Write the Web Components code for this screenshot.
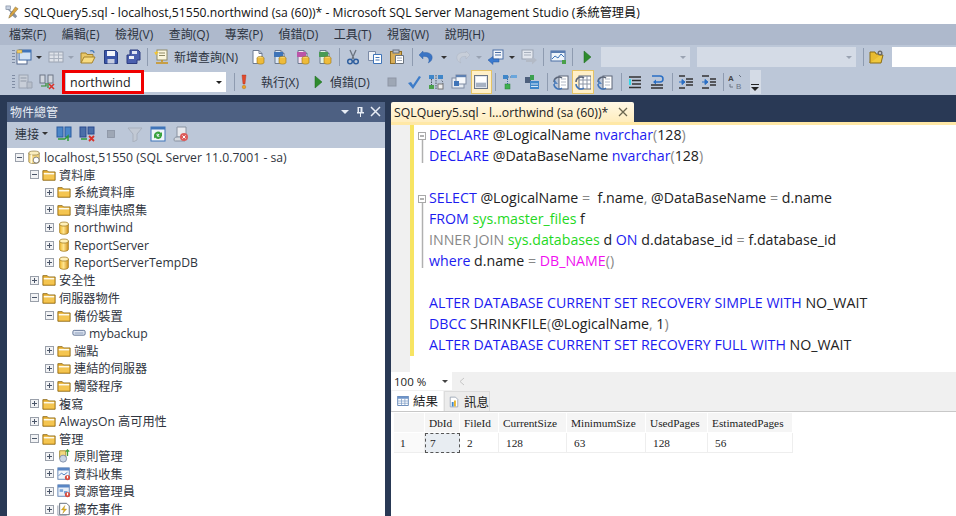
<!DOCTYPE html>
<html lang="zh-Hant">
<head>
<meta charset="utf-8">
<title>SSMS</title>
<style>
html,body{margin:0;padding:0;height:516px;overflow:hidden;background:#293955;font-family:"Open Sans","Noto Sans CJK TC",sans-serif;}
ssms-app{display:block;}
</style>
</head>
<body>
<ssms-app></ssms-app>
<script>
const SANS='"Open Sans","Noto Sans CJK TC",sans-serif';
const cyl='<defs><linearGradient id="g"><stop offset="0" stop-color="#f2b92e"/><stop offset=".45" stop-color="#ffe58f"/><stop offset="1" stop-color="#d1901a"/></linearGradient></defs><path d="M3 3.500v9.500c0 1.200 2.200 2.200 5 2.200s5-1 5-2.200V3.500z" fill="url(#g)" stroke="#9b7418" stroke-width=".8"/><ellipse cx="8" cy="3.500" rx="5" ry="2.300" fill="#fff0b8" stroke="#9b7418" stroke-width=".8"/>';
const doc=(c='#fff')=>`<path d="M4 1.500h6l3 3v10H4z" fill="${c}" stroke="#6d7a90"/><path d="M10 1.500v3h3" fill="none" stroke="#6d7a90"/>`;
const dbdot='<ellipse cx="11.500" cy="9" rx="3.500" ry="1.600" fill="#f7d36a" stroke="#9a7414" stroke-width=".6"/><path d="M8 9v4.500c0 .9 1.600 1.600 3.500 1.600s3.500-.7 3.500-1.600V9" fill="#eebb3a" stroke="#9a7414" stroke-width=".6"/>';
const ICONS={
 tools:'<path d="M2 2l5 5 1-1 5 6-2 2-6-5 1-1-5-5z" fill="#8a93a3"/><path d="M11 2l3 2-7 8-3 2 1-3z" fill="#d9a441" stroke="#7a6a3a" stroke-width=".5"/><rect x="1" y="1" width="5" height="4" fill="#c9d3e2" stroke="#6d7a90" stroke-width=".6"/>',
 newproj:'<rect x="1" y="3" width="10" height="12" fill="#fff" stroke="#54698c"/><rect x="3" y="1" width="12" height="10" fill="#cfe0f2" stroke="#3f6aa5"/><rect x="3" y="1" width="12" height="2.500" fill="#3f74b8"/><rect x="1" y="1" width="5" height="3" fill="#f2cf6a" stroke="#b08a2a" stroke-width=".5"/>',
 tbl:'<rect x="1" y="3" width="14" height="10" fill="#dfe3ea" stroke="#9aa3b2"/><path d="M1 6h14M1 9.500h14M6 3v10M10.500 3v10" stroke="#aab2bf" fill="none"/>',
 open:'<path d="M1 14V4h5l1 1.500h6V8" fill="#e9c768" stroke="#a5832d"/><path d="M1 14l3-6h11l-3 6z" fill="#f8dc82" stroke="#a5832d"/><path d="M10 2c2-1 4 0 4 2" fill="none" stroke="#4478b8" stroke-width="1.200"/>',
 save:'<path d="M1.500 1.500h11l2 2v11h-13z" fill="#3a55a8" stroke="#263c7e"/><rect x="4" y="2" width="8" height="5" fill="#f2f5fb"/><rect x="4.500" y="10" width="7" height="4.500" fill="#c6cde0"/>',
 saveall:'<path d="M5 1h8l2 2v8h-3v3.500H2V6h3z" fill="#4a5fae" stroke="#2c3c80"/><rect x="7" y="2" width="5" height="3" fill="#dfe4f3"/><rect x="4" y="7" width="5" height="3" fill="#eef1f9"/>',
 newq:'<rect x="3" y="1" width="10" height="10" fill="#fbf6dc" stroke="#8e8a66"/><path d="M5 4h6M5 6.500h6" stroke="#8e8a66"/><path d="M2 1l1 2 2 .5-2 1-1 2-1-2-1-1 2-.5z" fill="#f4c52a"/><path d="M8 11v2M2 14h12" stroke="#c99116" stroke-width="1.500"/>',
 docdb:doc()+dbdot,
 docdb2:doc('#dbe8f6')+'<rect x="3" y="3" width="9" height="5" fill="#3f74b8"/>'+dbdot,
 docdb3:doc('#f7e2f1')+'<rect x="3" y="3" width="9" height="5" fill="#bb55a8"/>'+dbdot,
 docdb4:doc('#e2f2e2')+'<rect x="3" y="3" width="9" height="5" fill="#4a9a55"/>'+dbdot,
 cut:'<path d="M5 1l4 9M11 1L7 10" stroke="#6b7480" stroke-width="1.300" fill="none"/><circle cx="5" cy="12.500" r="2.300" fill="none" stroke="#2f5f9f" stroke-width="1.500"/><circle cx="11" cy="12.500" r="2.300" fill="none" stroke="#2f5f9f" stroke-width="1.500"/>',
 copy:'<path d="M1.500 2.500h7v9h-7z" fill="#eef1f6" stroke="#7a8aa6"/><path d="M6.500 5.500h8v9h-8z" fill="#fff" stroke="#3f74b8"/><path d="M8.500 8.500h4M8.500 11h4" stroke="#3f74b8"/>',
 paste:'<rect x="1.500" y="2.500" width="11" height="12" fill="#d9ae58" stroke="#8d6c24"/><rect x="4" y="1" width="6" height="3" fill="#bfc5cf" stroke="#666f7e"/><path d="M6.500 6.500h8v8h-8z" fill="#fff" stroke="#6b7480"/><path d="M8 9h5M8 11.500h5" stroke="#a0a8b4"/>',
 undo:'<path d="M5 2L1 6l4 4V7.500c4-.5 6 1 6 4 0 1-.3 1.700-.8 2.500 3-1.500 4-3.500 4-5.500 0-4-4-5.500-9.200-5z" fill="#3a74c4" stroke="#2a5a9e" stroke-width=".4"/>',
 redo:'<path d="M11 2l4 4-4 4V7.500c-4-.5-6 1-6 4 0 1 .3 1.700.8 2.500-3-1.500-4-3.500-4-5.500 0-4 4-5.500 9.200-5z" fill="#c7ced9" stroke="#a7afbc" stroke-width=".4"/>',
 nav:'<rect x="5" y="1" width="10" height="9" fill="#f3f6fb" stroke="#4d70a5"/><path d="M7 3.500h6M7 6h6" stroke="#4d70a5"/><path d="M0 11l5-3.500V10h6v3H5v2.500z" fill="#3a7ad0" stroke="#28599e" stroke-width=".5"/>',
 navd:'<rect x="1" y="1" width="11" height="9" fill="#e3e7ee" stroke="#9aa3b2"/><path d="M3 3.500h7M3 6h7" stroke="#a8b0bd"/><path d="M16 11l-5-3.500V10H5v3h6v2.500z" fill="#b3bac6"/>',
 chart:'<rect x="1" y="2" width="14" height="10" fill="#eef4fa" stroke="#4d70a5"/><rect x="1" y="2" width="14" height="2" fill="#5a7db0"/><path d="M2 10l3-3 3 2 3-4 3 3" stroke="#3f74b8" fill="none"/><path d="M12 11h4v4h-4z" fill="#4aa04a"/>',
 play:'<path d="M5 2l7 6-7 6z" fill="#2e8b2e" stroke="#1f6a1f" stroke-width=".5"/>',
 opensm:'<path d="M1 14l2-8h11l-2 8z" fill="#f0c93f" stroke="#8b6d17"/><path d="M1 14V3h5l1 2h6" fill="#e8bb30" stroke="#8b6d17"/><circle cx="11" cy="4" r="2.500" fill="#6b6b6b"/><circle cx="11" cy="4" r="1" fill="#ddd"/>',
 srv1:'<rect x="2" y="1" width="9" height="13" fill="#c8ced8" stroke="#9aa3b2"/><path d="M3.500 4h6M3.500 7h6" stroke="#8f98a7"/><path d="M10 8h5v6h-5z" fill="#b8bfca" stroke="#9aa3b2"/>',
 srv2:'<rect x="1" y="1" width="5" height="8" fill="#d2d7df" stroke="#6c7686"/><rect x="9" y="1" width="5" height="8" fill="#d2d7df" stroke="#6c7686"/><path d="M2 12h5v-3M9 9v5" stroke="#2e8b2e" stroke-width="1.200" fill="none"/><path d="M10 10l5 5M15 10l-5 5" stroke="#d8322a" stroke-width="1.600"/>',
 bang:'<path d="M6 1h4L9 10H7z" fill="#e2482a" stroke="#a93218" stroke-width=".4"/><circle cx="8" cy="13" r="1.800" fill="#f0a11c" stroke="#a96a10" stroke-width=".4"/>',
 stop:'<rect x="4" y="4" width="8" height="8" fill="#9ea7b5" stroke="#8d96a5"/>',
 check:'<path d="M2 9l3-1 2 3 6-9 2 1-8 12z" fill="#3d7cc9"/>',
 plan:'<rect x="1" y="1" width="5" height="4" fill="#3f86c9"/><rect x="10" y="1" width="5" height="4" fill="#3f86c9"/><rect x="1" y="11" width="5" height="4" fill="#4aa04a"/><path d="M8 1v14M3.500 5v6M10 12a3 3 0 1 0 3-6" stroke="#4b5563" stroke-dasharray="1.500 1" fill="none"/><rect x="10" y="10" width="5" height="5" fill="#eee" stroke="#777"/>',
 win:'<rect x="1" y="4" width="12" height="10" fill="#e6ebf3" stroke="#7f8ca3"/><rect x="5" y="1" width="10" height="9" fill="#f6f8fb" stroke="#7f8ca3"/><rect x="5" y="1" width="10" height="2.200" fill="#5d80b2"/><rect x="3" y="7" width="5" height="5" fill="#3f74b8"/>',
 hsave:'<rect x="1.500" y="1.500" width="13" height="13" fill="#dfe5ee" stroke="#6c7686"/><rect x="3" y="9" width="10" height="4" fill="#a7b2c3"/><path d="M3 3h10v5H3z" fill="#fff"/>',
 tree:'<rect x="1" y="1" width="5" height="4" fill="#3f86c9"/><rect x="9" y="1" width="6" height="3" fill="#6aa6dc"/><rect x="3" y="10" width="5" height="5" fill="#3fb04f" stroke="#2b7f39" stroke-width=".5"/><path d="M5.500 5v5M6 3h3" stroke="#3a6a9a" stroke-dasharray="1 1"/>',
 blocks:'<rect x="1" y="3" width="6" height="6" fill="#4d5f7c"/><rect x="6" y="1" width="4" height="5" fill="#3ba04f"/><rect x="6" y="7" width="9" height="8" fill="#3f86c9"/><path d="M7 10h7M7 12.500h7" stroke="#d6e6f6"/>',
 res1:'<rect x="6" y="2" width="9" height="13" fill="#fff" stroke="#5c6678"/><path d="M8 5h5M8 8h5M8 11h5" stroke="#b3bac6"/><path d="M1 8a5 5 0 0 1 8-4" fill="none" stroke="#5c6678" stroke-width="1.500"/><path d="M1 10a5 5 0 0 0 8 4" fill="none" stroke="#3f74b8" stroke-width="1.500"/><path d="M1 5v5h4" fill="#3f74b8" opacity=".8"/>',
 res2:'<rect x="4" y="2" width="12" height="13" fill="#fff" stroke="#5c6678"/><path d="M4 6h12M4 10h12M8 2v13M12 2v13" stroke="#8c96a6"/><path d="M1 8a5 5 0 0 1 8-4" fill="none" stroke="#5c6678" stroke-width="1.500"/><path d="M1 10a5 5 0 0 0 8 4" fill="none" stroke="#3f74b8" stroke-width="1.500"/>',
 indent1:'<path d="M2 3h12M5 6.500h9M5 10h9M2 13.500h12" stroke="#333" stroke-width="1.300"/><path d="M2 5h2v6H2z" fill="#37d8e8"/>',
 indent2:'<path d="M3 2h8a2.500 2.500 0 0 1 0 6H6" stroke="#2a6fc4" stroke-width="1.500" fill="none"/><path d="M7 5.500L4 8l3 2.500z" fill="#2a6fc4"/><path d="M2 11h12M2 14h12" stroke="#333" stroke-width="1.300"/>',
 out1:'<path d="M1 2h6M8 5h7M8 8h7M8 11h7M1 14h6" stroke="#333" stroke-width="1.600"/><path d="M1 8h4M7 8L4 5.500v5z" fill="#2a6fc4" stroke="#2a6fc4"/>',
 out2:'<path d="M1 2h7M9 5h6M9 8h6M9 11h6M1 14h7" stroke="#333" stroke-width="1.600"/><path d="M1 8h3M7 8L4 5.500v5z" fill="#2a6fc4" stroke="#2a6fc4"/>',
 spec:'<text x="0" y="7" font-size="8" font-family="Liberation Sans" font-weight="bold" fill="#444">A</text><text x="8" y="15" font-size="8" font-family="Liberation Sans" fill="#6a7484">B</text><path d="M11 1l2 2M2 10v3h3" stroke="#6a7484" fill="none"/>',
 conn1:'<rect x="1" y="1" width="6" height="10" fill="#4a86c8" stroke="#2a5a9e"/><rect x="9" y="1" width="6" height="10" fill="#4a86c8" stroke="#2a5a9e"/><path d="M2 13h7M9 13l3-3v5" stroke="#2e9b3a" stroke-width="1.500" fill="none"/>',
 conn2:'<rect x="1" y="1" width="6" height="10" fill="#4a6ea8" stroke="#2a4a8e"/><rect x="9" y="1" width="6" height="7" fill="#4a6ea8" stroke="#2a4a8e"/><path d="M2 13h6" stroke="#2e9b3a" stroke-width="1.500"/><path d="M10 10l5 5M15 10l-5 5" stroke="#d8322a" stroke-width="1.800"/>',
 filter:'<path d="M1 2h14L10 8v6l-4 2V8z" fill="#c2c9d4" stroke="#a8b0bd"/>',
 refresh:'<rect x="1" y="1" width="14" height="14" fill="#f0f5fb" stroke="#3f74b8"/><rect x="1" y="1" width="14" height="2.500" fill="#3f74b8"/><path d="M4 9a4 4 0 0 1 7-2l1-1v4H8l1.500-1.300A2.400 2.400 0 0 0 5.500 9zM12 9.500a4 4 0 0 1-7 2l-1 1v-4h4l-1.500 1.300a2.400 2.400 0 0 0 4 -.3z" fill="#39a33f"/>',
 report:'<path d="M4 1h9v10H4z" fill="#e7e9ee" stroke="#8992a1"/><path d="M1 14c0-2 1-3 3-3h8c-1 1-1 3 0 4H3c-1 0-2 0-2-1z" fill="#d4d8df" stroke="#8992a1"/><circle cx="11" cy="11" r="4" fill="#dc5b5b"/><path d="M9.500 9.500l3 3M12.500 9.500l-3 3" stroke="#fff"/>',
 server:'<path d="M2 3.500v10c0 1 2.500 2 6 2s6-1 6-2v-10z" fill="#f5d57c" stroke="#8c7a45" stroke-width=".8"/><ellipse cx="8" cy="3.500" rx="6" ry="2.300" fill="#fbeebe" stroke="#8c7a45" stroke-width=".8"/><path d="M5 5v10" stroke="#fff8dc" stroke-width="2"/><circle cx="10.500" cy="11.500" r="3.400" fill="#fff" stroke="#777"/>',
 folder:'<path d="M1 14V3h5l1.500 1.500H15V14z" fill="#e8ad2c" stroke="#8f6d1c"/><path d="M2 5.500h12V7.500H2z" fill="#fffbe8"/><path d="M2 8h12v5H2z" fill="#f4c550"/>',
 db:cyl,
 device:'<rect x="1" y="5" width="14" height="5.500" rx="1.500" fill="#dfe6f2" stroke="#55688a"/><path d="M3 8h10" stroke="#8ea0bd" stroke-width="1.200"/>',
 policy:'<path d="M3 2h7v9H3z" fill="#f3d97e" stroke="#a68a30"/><circle cx="7" cy="11" r="4" fill="#cad5e4" stroke="#7d8ca5"/><path d="M12 1v7M10 3l2-2 2 2" stroke="#3f9f3f" stroke-width="1.500" fill="none"/>',
 collect:'<rect x="1" y="1" width="13" height="13" fill="#f3f7fb" stroke="#5a7cae"/><rect x="1" y="1" width="13" height="3" fill="#5a86c4"/><path d="M2 10l3-3 3 2 4-3" stroke="#3f74b8" fill="none"/><circle cx="12" cy="12" r="3" fill="#d84c3e"/><rect x="11.300" y="10" width="1.400" height="3" fill="#fff"/>',
 resgov:'<rect x="1" y="1" width="13" height="13" fill="#eaf0f8" stroke="#5a7cae"/><rect x="1" y="1" width="13" height="3" fill="#5a86c4"/><rect x="3" y="6" width="4" height="3" fill="#7aa4d8"/><rect x="8" y="8" width="4" height="3" fill="#7aa4d8"/><circle cx="12" cy="12" r="3" fill="#d84c3e"/><rect x="11.300" y="10" width="1.400" height="3" fill="#fff"/>',
 ext:'<path d="M3 1.500h8l3 3v10H3z" fill="#fff" stroke="#55606f"/><path d="M1 4v11h10" fill="none" stroke="#8b94a3"/><path d="M9 4L5 9h3l-1.500 4L11 8H8z" fill="#e5b420" stroke="#a57e12" stroke-width=".4"/>',
 grid:'<rect x="1" y="2" width="14" height="12" fill="#fff" stroke="#3f6aa5"/><rect x="1" y="2" width="14" height="3" fill="#6d94c9"/><path d="M1 8h14M1 11h14M6 5v9M10.500 5v9" stroke="#7d9cc6"/>',
 msg:'<path d="M3 1.500h7l3 3v10H3z" fill="#fff" stroke="#8d99ab"/><rect x="5" y="8" width="2.500" height="6" fill="#3f86c9"/><rect x="8" y="6" width="2.500" height="8" fill="#e8b52e"/>'
};
const svg=(n,w=16,h=16)=>`<svg xmlns="http://www.w3.org/2000/svg" width="${w}" height="${h}" viewBox="0 0 16 16" style="display:block;flex:none">${ICONS[n]||''}</svg>`;

class TitleBar extends HTMLElement{constructor(){super();this.attachShadow({mode:'open'}).innerHTML=`<style>
:host{display:flex;align-items:center;height:24px;background:#fff;color:#111;font:12.150px ${SANS};gap:4px;padding-left:5px;white-space:nowrap}
</style>${svg('tools',15,15)}<slot></slot>`}}
customElements.define('title-bar',TitleBar);

class MenuBar extends HTMLElement{constructor(){super();this.attachShadow({mode:'open'}).innerHTML=`<style>
:host{display:flex;align-items:center;height:21px;background:#aeb9cc;color:#2c3340;font:12px ${SANS};gap:15.500px;padding:0 0 2px 9px;box-sizing:border-box;white-space:nowrap}
</style><slot></slot>`}}
customElements.define('menu-bar',MenuBar);

class ToolBar extends HTMLElement{constructor(){super();this.attachShadow({mode:'open'}).innerHTML=`<style>
:host{display:flex;align-items:center;background:#bcc7d8;height:24px;color:#2c3340;font:12px ${SANS};white-space:nowrap;overflow:hidden}
.grip{width:3px;height:15px;margin:0 0 0 12px;flex:none;background:repeating-linear-gradient(#7f8ca3 0 1px,transparent 1px 3px)}
</style><div class="grip"></div><slot></slot>`}}
customElements.define('tool-bar',ToolBar);

class TbIcon extends HTMLElement{
 constructor(){super();this.attachShadow({mode:'open'})}
 connectedCallback(){
  const w=+(this.getAttribute('w')||23),hi=this.hasAttribute('hi'),n=this.getAttribute('n'),s=+(this.getAttribute('s')||16);
  this.shadowRoot.innerHTML=`<style>:host{display:flex;flex:none;align-items:center;justify-content:center;width:${w}px;height:${hi?24:22}px;box-sizing:border-box;${hi?'background:#fff0c8;border:1px solid #e5c365;':''}}</style>${svg(n,s,s)}`;
 }
}
customElements.define('tb-icon',TbIcon);

class TbArrow extends HTMLElement{constructor(){super();const c=this.getAttribute('dim')!==null?'#98a2b2':'#333';this.attachShadow({mode:'open'}).innerHTML=`<style>:host{display:block;flex:none;width:${this.getAttribute('w')||9}px}i{display:block;width:0;height:0;margin:0 auto;border:3px solid transparent;border-bottom:0;border-top-color:${c}}</style><i></i>`}}
customElements.define('tb-arrow',TbArrow);

class TbSep extends HTMLElement{constructor(){super();const l=this.getAttribute('l')||this.getAttribute('m')||3,r=this.getAttribute('r')||this.getAttribute('m')||3;this.attachShadow({mode:'open'}).innerHTML=`<style>:host{display:block;flex:none;width:1px;height:18px;background:#8e9bb0;margin:0 ${r}px 0 ${l}px}</style>`}}
customElements.define('tb-sep',TbSep);

class TbGap extends HTMLElement{constructor(){super();this.attachShadow({mode:'open'}).innerHTML=`<style>:host{display:block;flex:none;width:${this.getAttribute('w')}px}</style>`}}
customElements.define('tb-gap',TbGap);

class TbLabel extends HTMLElement{constructor(){super();this.attachShadow({mode:'open'}).innerHTML=`<style>:host{display:block;flex:none}</style><slot></slot>`}}
customElements.define('tb-label',TbLabel);

class TbCombo extends HTMLElement{constructor(){super();
 const w=this.getAttribute('w'),dis=this.hasAttribute('disabled'),red=this.hasAttribute('mark');
 this.attachShadow({mode:'open'}).innerHTML=`<style>
 :host{display:flex;flex:none;align-items:center;position:relative;box-sizing:border-box;width:${w}px;height:20px;background:${dis?'#d4dbe6':'#fff'};font:12.500px ${SANS};color:#1a1a1a;padding-left:4px}
 i{position:absolute;right:4px;top:9px;border:3px solid transparent;border-bottom:0;border-top-color:${dis?'#9aa3b2':'#222'}}
 b{position:absolute;left:-4px;top:-2px;width:82px;height:24px;box-sizing:border-box;border:3px solid #f00000;display:${red?'block':'none'}}
 </style><slot></slot><i></i><b></b>`}}
customElements.define('tb-combo',TbCombo);

class ToolPanel extends HTMLElement{constructor(){super();
 this.attachShadow({mode:'open'}).innerHTML=`<style>
 :host{display:flex;flex-direction:column;width:378px;height:414px;background:#fff;overflow:hidden;flex:none}
 header{display:flex;align-items:center;height:20px;box-sizing:border-box;background:#4d6082;color:#e8edf5;font:12px ${SANS};padding:0 4px 1px 3px;flex:none}
 header span{flex:1}
 header svg{margin-left:5px}
 .bar{display:flex;align-items:center;height:26px;box-sizing:border-box;background:#bcc7d8;flex:none;padding:0 0 3px 8px;color:#2c3340;font:12px ${SANS}}
 .bar i{margin:0 8px 0 3px;border:3px solid transparent;border-bottom:0;border-top-color:#333}
 .ico{margin-right:7px}
 .tree{flex:1;padding-top:.4px}
 </style>
 <header><span>物件總管</span>
  <svg width="9" height="9" viewBox="0 0 9 9"><path d="M0 3h8L4 7z" fill="#e8edf5"/></svg>
  <svg width="10" height="11" viewBox="0 0 10 11"><path d="M2.500 1h5v5h1.500v1.500h-3V11h-1V7.500h-3V6h.5zM4 2v4h1.500V2z" fill="#e8edf5"/></svg>
  <svg width="11" height="11" viewBox="0 0 11 11"><path d="M1 1l9 9M10 1l-9 9" stroke="#e8edf5" stroke-width="1.500"/></svg>
 </header>
 <div class="bar"><span>連接</span><i></i><span class="ico">${svg('conn1')}</span><span class="ico">${svg('conn2')}</span><span class="ico" style="margin-left:2px;margin-right:9px">${svg('stop',14,14)}</span><span class="ico">${svg('filter')}</span><span class="ico">${svg('refresh')}</span><span class="ico">${svg('report')}</span></div>
 <div class="tree"><slot></slot></div>`}}
customElements.define('tool-panel',ToolPanel);

class TreeNode extends HTMLElement{constructor(){super();this.attachShadow({mode:'open'})}
 connectedCallback(){
  const d=+this.getAttribute('d'),ex=this.getAttribute('ex'),ic=this.getAttribute('i');
  const box=ex?`<svg width="9" height="9" viewBox="0 0 9 9" style="display:block"><rect x=".5" y=".5" width="8" height="8" fill="#f2f3f5" stroke="#9aa0aa"/><path d="M2 4.500h5${ex==='+'?'M4.500 2v5':''}" stroke="#4a5568"/></svg>`:'';
  this.shadowRoot.innerHTML=`<style>
  :host{display:flex;align-items:center;height:17.600px;padding-left:${8+d*15}px;color:#303540;font:12.200px ${SANS};white-space:nowrap}
  .x{width:9px;height:9px;flex:none;margin-right:3px}
  .i{flex:none;width:14px;margin-right:3px}
  </style><span class="x">${box}</span><span class="i">${svg(ic,14,14)}</span><slot></slot>`}}
customElements.define('tree-node',TreeNode);

class DocTab extends HTMLElement{constructor(){super();this.attachShadow({mode:'open'}).innerHTML=`<style>
 :host{display:flex;align-items:center;width:243px;height:20px;box-sizing:border-box;padding:0 6px 0 3px;background:linear-gradient(#fff8e6,#ffedbd);border-radius:2px 2px 0 0;color:#222;font:12.300px ${SANS};white-space:nowrap;justify-content:space-between}
 </style><slot></slot><svg width="10" height="10" viewBox="0 0 10 10"><path d="M1 1l8 8M9 1l-8 8" stroke="#6b6650" stroke-width="1.300"/></svg>`}}
customElements.define('doc-tab',DocTab);

class SqlEditor extends HTMLElement{constructor(){super();this.attachShadow({mode:'open'}).innerHTML=`<style>
 :host{display:flex;height:247px;background:#fff;overflow:hidden}
 .g{width:19px;background:#f0f0f0;flex:none}
 .c{flex:1;align-self:flex-start;border-left:4px solid #f7e463;padding-left:4px}
 </style><div class="g"></div><div class="c"><slot></slot></div>`}}
customElements.define('sql-editor',SqlEditor);

class SqlLine extends HTMLElement{constructor(){super();this.attachShadow({mode:'open'})}
 connectedCallback(){
  const m=this.getAttribute('m');
  const o=m==='box'?`<svg width="11" height="21" viewBox="0 0 11 21" style="display:block"><path d="M4.500 14v7" stroke="#b0b0b0" stroke-width="1.500"/><rect x=".5" y="7.500" width="7" height="7" fill="#fff" stroke="#a9a9a9"/><path d="M2 11h4" stroke="#666"/></svg>`
   :m==='line'?`<svg width="11" height="21" viewBox="0 0 11 21" style="display:block"><path d="M4.500 0v21" stroke="#b0b0b0" stroke-width="1.500"/></svg>`
   :m==='end'?`<svg width="11" height="21" viewBox="0 0 11 21" style="display:block"><path d="M4.500 0v17" stroke="#b0b0b0" stroke-width="1.500"/></svg>`:'';
  this.shadowRoot.innerHTML=`<style>
  :host{display:flex;height:21px;font:14.200px/20px ${SANS};color:#222;white-space:pre}
  .o{width:11px;flex:none}
  </style><span class="o">${o}</span><slot></slot>`}}
customElements.define('sql-line',SqlLine);

class SqlTok extends HTMLElement{constructor(){super();const C={k:'#1c1cf0',g:'#888',t:'#1fd81f',f:'#f010f0'};this.attachShadow({mode:'open'}).innerHTML=`<style>:host{color:${C[this.getAttribute('c')]}}</style><slot></slot>`}}
customElements.define('sql-tok',SqlTok);

class ZoomBar extends HTMLElement{constructor(){super();this.attachShadow({mode:'open'}).innerHTML=`<style>
 :host{display:flex;align-items:center;height:18px;background:#f0f0f0;font:11.500px ${SANS};color:#222}
 .z{display:flex;align-items:center;width:61px;height:18px;background:#fff;padding-left:3px;box-sizing:border-box;position:relative}
 i{position:absolute;right:4px;top:8px;border:3px solid transparent;border-bottom:0;border-top-color:#444}
 svg{margin-left:7px}
 </style><div class="z"><slot></slot><i></i></div><svg width="6" height="9" viewBox="0 0 6 9"><path d="M5 1L1 4.500 5 8" fill="none" stroke="#c6c6c6"/></svg>`}}
customElements.define('zoom-bar',ZoomBar);

class ResTabs extends HTMLElement{constructor(){super();this.attachShadow({mode:'open'}).innerHTML=`<style>
 :host{display:flex;align-items:flex-end;height:22px;background:#f0f0f0;padding-left:1px;border-bottom:1px solid #c8c8c8;box-sizing:border-box}
 </style><slot></slot>`}}
customElements.define('res-tabs',ResTabs);

class ResTab extends HTMLElement{constructor(){super();const a=this.hasAttribute('active');this.attachShadow({mode:'open'}).innerHTML=`<style>
 :host{display:flex;align-items:center;gap:4px;height:20px;box-sizing:border-box;padding:0 0 0 ${a?5:3}px;width:${this.getAttribute('w')}px;margin-right:1px;background:${a?'#fff':'#ececec'};font:12.500px/16px "Noto Sans CJK TC",sans-serif;color:#222;white-space:nowrap;${a?'':'border:1px solid #dcdcdc;border-bottom:0;'}}
 </style>${svg(this.getAttribute('i'),12,12)}<slot></slot>`}}
customElements.define('res-tab',ResTab);

class ResGrid extends HTMLElement{constructor(){super();this.attachShadow({mode:'open'}).innerHTML=`<style>
 :host{display:grid;grid-template-columns:31px 35px 39px 68px 79px 62px 85px;grid-auto-rows:20px;justify-content:start;font:11.300px "Liberation Serif","Noto Sans CJK TC",serif;color:#222;margin:1px 0 0 3px}
 </style><slot></slot>`}}
customElements.define('res-grid',ResGrid);

class GridCell extends HTMLElement{constructor(){super();const mode=this.getAttribute('t');this.attachShadow({mode:'open'}).innerHTML=`<style>
 :host{display:flex;align-items:center;box-sizing:border-box;padding-left:${mode==='d'?7:mode==='s'?4:mode==='r'?6:4}px;
 ${mode==='h'?'background:#f5f5f5;border-right:1px solid #fff;border-bottom:1px solid #fff;':''}
 ${mode==='d'?'border-right:1px solid #eee;border-bottom:1px solid #eee;':''}
 ${mode==='s'?'background:#e8edf2;border:1px dashed #555;':''}
 ${mode==='r'?'background:#fafafa;border-right:1px solid #eee;border-bottom:1px solid #eee;':''}
 }</style><slot></slot>`}}
customElements.define('grid-cell',GridCell);

class SsmsApp extends HTMLElement{constructor(){super();this.attachShadow({mode:'open'}).innerHTML=`<style>
 :host{display:block;width:956px;height:516px;overflow:hidden;background:#293955}
 .bars{display:flex;flex-direction:column}
 .main{display:flex;padding:7px 0 0 7px;gap:6px;height:414px}
 .right{flex:1;display:flex;flex-direction:column;min-width:0;height:414px;overflow:hidden}
 .strip{height:3px;background:#ffe8a6;flex:none}
 .res{flex:1;background:#fff}
 .t1{height:24px}.t2{height:26px}
 .wide{height:20px;background:#fff;flex:none;width:70px}
 .end{width:11px;height:24px;background:#d4dbe6;flex:none;display:flex;align-items:flex-end;justify-content:center;padding-bottom:3px;box-sizing:border-box}
 </style>
 <div class="bars">
 <title-bar>SQLQuery5.sql - localhost,51550.northwind (sa (60))* - Microsoft SQL Server Management Studio (系統管理員)</title-bar>
 <menu-bar><span>檔案(F)</span><span>編輯(E)</span><span>檢視(V)</span><span>查詢(Q)</span><span>專案(P)</span><span>偵錯(D)</span><span>工具(T)</span><span>視窗(W)</span><span>說明(H)</span></menu-bar>
 <tool-bar class="t1">
  <tb-icon n="newproj" w="18"></tb-icon><tb-arrow w="12"></tb-arrow><tb-icon n="tbl" w="21"></tb-icon><tb-arrow w="10" dim></tb-arrow><tb-icon n="open" w="24"></tb-icon><tb-icon n="save" w="21"></tb-icon><tb-icon n="saveall" w="24"></tb-icon><tb-sep m="2"></tb-sep>
  <tb-icon n="newq" w="23"></tb-icon><tb-gap w="1"></tb-gap><tb-label>新增查詢(N)</tb-label><tb-gap w="7.250"></tb-gap>
  <tb-icon n="docdb" w="22.500"></tb-icon><tb-icon n="docdb2" w="22.500"></tb-icon><tb-icon n="docdb3" w="22.500"></tb-icon><tb-icon n="docdb4" w="22.500"></tb-icon><tb-sep l="3.500" r="3.500"></tb-sep>
  <tb-icon n="cut" w="20"></tb-icon><tb-icon n="copy" w="23"></tb-icon><tb-icon n="paste" w="21"></tb-icon><tb-sep m="5"></tb-sep>
  <tb-icon n="undo" w="15"></tb-icon><tb-arrow w="22"></tb-arrow><tb-icon n="redo" w="15"></tb-icon><tb-arrow w="18" dim></tb-arrow><tb-icon n="nav" w="16"></tb-icon><tb-arrow w="16"></tb-arrow><tb-icon n="navd" w="18"></tb-icon><tb-sep m="5"></tb-sep>
  <tb-icon n="chart" w="18"></tb-icon><tb-sep m="5"></tb-sep><tb-icon n="play" w="18"></tb-icon><tb-gap w="5"></tb-gap>
  <tb-combo w="89" disabled></tb-combo><tb-gap w="7"></tb-gap><tb-combo w="159" disabled></tb-combo><tb-gap w="4"></tb-gap><tb-sep m="3"></tb-sep><tb-icon n="opensm" w="20"></tb-icon><tb-gap w="5"></tb-gap><div class="wide"></div>
 </tool-bar>
 <tool-bar class="t2">
  <tb-icon n="srv1" w="20"></tb-icon><tb-icon n="srv2" w="24"></tb-icon><tb-gap w="7"></tb-gap>
  <tb-combo w="160" mark>northwind</tb-combo><tb-sep m="8" r="0"></tb-sep>
  <tb-icon n="bang" w="17"></tb-icon><tb-gap w="9"></tb-gap><tb-label>執行(X)</tb-label><tb-gap w="10"></tb-gap><tb-icon n="play" w="18"></tb-icon><tb-gap w="3"></tb-gap><tb-label>偵錯(D)</tb-label><tb-gap w="11"></tb-gap>
  <tb-icon n="stop" w="22"></tb-icon><tb-icon n="check" w="22"></tb-icon><tb-icon n="plan" w="22"></tb-icon><tb-icon n="win" w="24"></tb-icon><tb-icon n="hsave" w="21" hi></tb-icon><tb-sep l="3.500" r="3.500"></tb-sep>
  <tb-icon n="tree" w="21"></tb-icon><tb-icon n="blocks" w="23"></tb-icon><tb-sep m="3"></tb-sep>
  <tb-icon n="res1" w="21"></tb-icon><tb-icon n="res2" w="22" hi></tb-icon><tb-icon n="res1" w="23"></tb-icon><tb-sep m="4"></tb-sep>
  <tb-icon n="indent1" w="18"></tb-icon><tb-icon n="indent2" w="27"></tb-icon><tb-sep m="1"></tb-sep>
  <tb-icon n="out1" w="25"></tb-icon><tb-icon n="out2" w="20"></tb-icon><tb-sep m="4" r="4"></tb-sep>
  <tb-icon n="spec" w="17"></tb-icon><tb-gap w="5"></tb-gap><span class="end"><svg width="8" height="7" viewBox="0 0 8 7"><path d="M0 0h8v1H0zM0 3h8L4 7z" fill="#222"/></svg></span>
 </tool-bar>
 </div>
 <div class="main">
  <tool-panel>
   <tree-node d="0" ex="-" i="server">localhost,51550 (SQL Server 11.0.7001 - sa)</tree-node>
   <tree-node d="1" ex="-" i="folder">資料庫</tree-node>
   <tree-node d="2" ex="+" i="folder">系統資料庫</tree-node>
   <tree-node d="2" ex="+" i="folder">資料庫快照集</tree-node>
   <tree-node d="2" ex="+" i="db">northwind</tree-node>
   <tree-node d="2" ex="+" i="db">ReportServer</tree-node>
   <tree-node d="2" ex="+" i="db">ReportServerTempDB</tree-node>
   <tree-node d="1" ex="+" i="folder">安全性</tree-node>
   <tree-node d="1" ex="-" i="folder">伺服器物件</tree-node>
   <tree-node d="2" ex="-" i="folder">備份裝置</tree-node>
   <tree-node d="3" i="device">mybackup</tree-node>
   <tree-node d="2" ex="+" i="folder">端點</tree-node>
   <tree-node d="2" ex="+" i="folder">連結的伺服器</tree-node>
   <tree-node d="2" ex="+" i="folder">觸發程序</tree-node>
   <tree-node d="1" ex="+" i="folder">複寫</tree-node>
   <tree-node d="1" ex="+" i="folder">AlwaysOn 高可用性</tree-node>
   <tree-node d="1" ex="-" i="folder">管理</tree-node>
   <tree-node d="2" ex="+" i="policy">原則管理</tree-node>
   <tree-node d="2" ex="+" i="collect">資料收集</tree-node>
   <tree-node d="2" ex="+" i="resgov">資源管理員</tree-node>
   <tree-node d="2" ex="+" i="ext">擴充事件</tree-node>
  </tool-panel>
  <div class="right">
   <doc-tab>SQLQuery5.sql - l...orthwind (sa (60))*</doc-tab>
   <div class="strip"></div>
   <sql-editor>
    <sql-line m="box"><span><sql-tok c="k">DECLARE</sql-tok> @LogicalName <sql-tok c="k">nvarchar</sql-tok><sql-tok c="g">(</sql-tok>128<sql-tok c="g">)</sql-tok></span></sql-line>
    <sql-line m="end"><span><sql-tok c="k">DECLARE</sql-tok> @DataBaseName <sql-tok c="k">nvarchar</sql-tok><sql-tok c="g">(</sql-tok>128<sql-tok c="g">)</sql-tok></span></sql-line>
    <sql-line></sql-line>
    <sql-line m="box"><span><sql-tok c="k">SELECT</sql-tok> @LogicalName <sql-tok c="g">=</sql-tok>  f.name<sql-tok c="g">,</sql-tok> @DataBaseName <sql-tok c="g">=</sql-tok> d.name</span></sql-line>
    <sql-line m="line"><span><sql-tok c="k">FROM</sql-tok> <sql-tok c="t">sys.master_files</sql-tok> f</span></sql-line>
    <sql-line m="line"><span><sql-tok c="g">INNER JOIN</sql-tok> <sql-tok c="t">sys.databases</sql-tok> d <sql-tok c="k">ON</sql-tok> d.database_id <sql-tok c="g">=</sql-tok> f.database_id</span></sql-line>
    <sql-line m="end"><span><sql-tok c="k">where</sql-tok> d.name <sql-tok c="g">=</sql-tok> <sql-tok c="f">DB_NAME</sql-tok><sql-tok c="g">()</sql-tok></span></sql-line>
    <sql-line></sql-line>
    <sql-line><span><sql-tok c="k">ALTER DATABASE CURRENT SET RECOVERY SIMPLE WITH</sql-tok> NO_WAIT</span></sql-line>
    <sql-line><span><sql-tok c="k">DBCC</sql-tok> SHRINKFILE<sql-tok c="g">(</sql-tok>@LogicalName<sql-tok c="g">,</sql-tok> 1<sql-tok c="g">)</sql-tok></span></sql-line>
    <sql-line><span><sql-tok c="k">ALTER DATABASE CURRENT SET RECOVERY FULL WITH</sql-tok> NO_WAIT</span></sql-line>
   </sql-editor>
   <zoom-bar>100 %</zoom-bar>
   <res-tabs><res-tab active i="grid" w="51">結果</res-tab><res-tab i="msg" w="46">訊息</res-tab></res-tabs>
   <div class="res">
    <res-grid>
     <grid-cell t="h"></grid-cell><grid-cell t="h">DbId</grid-cell><grid-cell t="h">FileId</grid-cell><grid-cell t="h">CurrentSize</grid-cell><grid-cell t="h">MinimumSize</grid-cell><grid-cell t="h">UsedPages</grid-cell><grid-cell t="h">EstimatedPages</grid-cell>
     <grid-cell t="r">1</grid-cell><grid-cell t="s">7</grid-cell><grid-cell t="d">2</grid-cell><grid-cell t="d">128</grid-cell><grid-cell t="d">63</grid-cell><grid-cell t="d">128</grid-cell><grid-cell t="d">56</grid-cell>
    </res-grid>
   </div>
  </div>
 </div>`}}
customElements.define('ssms-app',SsmsApp);
</script>
</body>
</html>
